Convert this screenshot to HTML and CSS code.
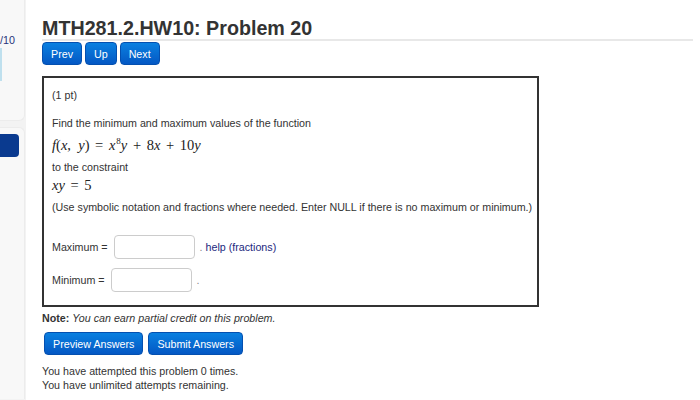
FILE: index.html
```html
<!DOCTYPE html>
<html lang="en">
<head>
    <meta charset="UTF-8">
    <title>MTH281.2.HW10: Problem 20</title>
    <link rel="stylesheet" href="styles.css">
</head>
<body>
    <div class="page">
        <div class="sidebar">
            <div class="side-panel first">
                <div class="side-count">/10</div>
                <div class="side-field"></div>
            </div>
            <div class="side-panel second">
                <div class="side-button"></div>
            </div>
        </div>

        <div class="main">
            <div class="header">
                <h1>MTH281.2.HW10: Problem 20</h1>
            </div>
            <div class="nav">
                <button class="btn">Prev</button>
                <button class="btn">Up</button>
                <button class="btn">Next</button>
            </div>

            <div class="problem">
                <p class="pts">(1 pt)</p>
                <p class="line first">Find the minimum and maximum values of the function</p>
                <p class="math"><i>f</i>(<i>x</i>,&nbsp; <i>y</i>) <span class="op">=</span> <i>x</i><sup>8</sup><i>y</i> <span class="op">+</span> 8<i>x</i> <span class="op">+</span> 10<i>y</i></p>
                <p class="line">to the constraint</p>
                <p class="math tight"><i>x</i><i>y</i> <span class="op">=</span> 5</p>
                <p class="line nowrap">(Use symbolic notation and fractions where needed. Enter NULL if there is no maximum or minimum.)</p>

                <div class="answer max">
                    <label>Maximum =</label>
                    <input type="text" class="field">
                    <span class="dot">.</span>
                    <a class="help">help (fractions)</a>
                </div>
                <div class="answer min">
                    <label>Minimum =</label>
                    <input type="text" class="field">
                    <span class="dot">.</span>
                </div>
            </div>

            <p class="note"><b>Note:</b> <i>You can earn partial credit on this problem.</i></p>

            <div class="submit">
                <button class="btn big">Preview Answers</button>
                <button class="btn big">Submit Answers</button>
            </div>

            <p class="attempts">You have attempted this problem 0 times.<br>You have unlimited attempts remaining.</p>
        </div>
    </div>
</body>
</html>
```

FILE: styles.css
```css
body {
    margin: 0;
    font-family: 'Liberation Sans', Arial, sans-serif;
    font-size: 10.7px;
    color: #333;
    background: #fff;
}
p {
    margin: 0;
}
.page {
    display: flex;
    height: 400px;
    overflow: hidden;
}
.sidebar {
    width: 26px;
    flex-shrink: 0;
    background: #f3f3f3;
}
.side-panel {
    width: 25px;
    background: #f8f8f8;
    border-right: 1px solid #ececec;
    border-radius: 0 0 6px 0;
}
.side-panel.first {
    height: 121px;
    border-bottom: 1px solid #ececec;
    padding-top: 33px;
    box-sizing: border-box;
}
.side-panel.second {
    margin-top: 6px;
    border-top: 1px solid #ececec;
    border-radius: 0 6px 0 0;
    height: 272px;
    padding-top: 6px;
    box-sizing: border-box;
}
.side-count {
    font-size: 10.7px;
    color: #27337a;
    line-height: 14px;
}
.side-field {
    margin-top: 1px;
    width: 2px;
    height: 33px;
    background: #bfe0ee;
}
.side-button {
    width: 19px;
    height: 23px;
    background: #0a3a8f;
    border-radius: 0 4px 4px 0;
}
.main {
    flex: 1;
    padding-left: 16px;
    padding-right: 7px;
}
.header {
    border-bottom: 2px solid #e8e8e8;
    height: 41px;
    box-sizing: border-box;
}
h1 {
    margin: 0;
    padding-top: 17px;
    font-size: 19.7px;
    line-height: 22px;
    font-weight: bold;
    color: #333;
}
.nav {
    display: flex;
    gap: 3px;
    margin-top: 1px;
}
.btn {
    font-family: 'Liberation Sans', Arial, sans-serif;
    font-size: 10.7px;
    color: #fff;
    background: linear-gradient(#0a80e0, #0458c4);
    border: 1px solid #0450b0;
    border-radius: 4px;
    height: 23px;
    padding: 0 8px;
    cursor: pointer;
}
.problem {
    width: 497px;
    box-sizing: border-box;
    border: 2px solid #333;
    margin-top: 11px;
    padding: 10px 6px 13px 8px;
}
.pts, .line {
    line-height: 14px;
}
.line.first {
    margin-top: 14px;
}
.line {
    margin-top: 6px;
}
.nowrap {
    white-space: nowrap;
}
.math {
    font-family: 'Liberation Serif', 'Times New Roman', serif;
    font-size: 14.5px;
    line-height: 18px;
    color: #222;
    margin-top: 6px;
}
.math.tight {
    margin-top: 2px;
}
.math .op {
    padding: 0 2px;
}
.math sup {
    font-size: 9px;
    line-height: 0;
    vertical-align: 6px;
    margin-left: 1px;
}
.answer {
    display: flex;
    align-items: center;
    height: 24px;
}
.answer.max {
    margin-top: 21px;
}
.answer.min {
    margin-top: 9px;
}
.answer label {
    margin-right: 6px;
}
.field {
    width: 81px;
    height: 24px;
    box-sizing: border-box;
    border: 1px solid #ccc;
    border-radius: 4px;
    margin: 0;
}
.dot {
    margin-left: 5px;
    color: #888;
}
.help {
    margin-left: 3px;
    color: #23287e;
}
.note {
    margin-top: 4px;
    line-height: 14px;
}
.submit {
    display: flex;
    gap: 5px;
    margin-top: 7px;
    padding-left: 2px;
}
.btn.big {
    padding: 0 8px;
}
.attempts {
    margin-top: 9px;
    line-height: 14px;
}
```
